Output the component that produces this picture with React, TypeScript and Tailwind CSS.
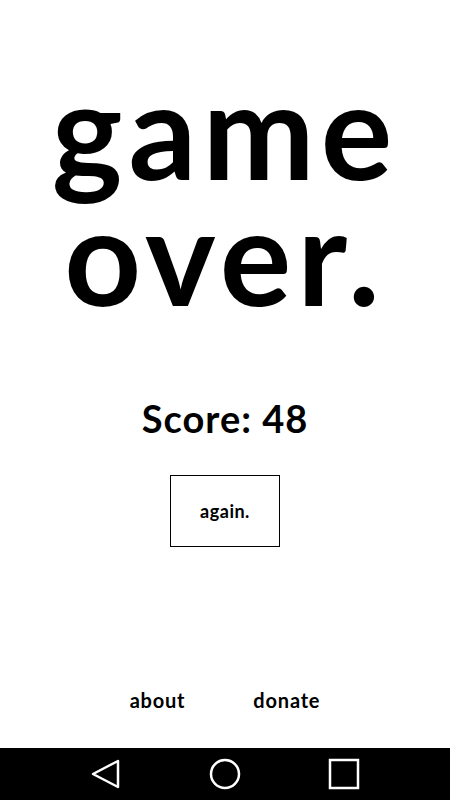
export default function App() {
  return (
    <div className="flex h-[800px] w-[450px] flex-col bg-white text-black" style={{ fontFamily: 'Lato, "Open Sans", sans-serif' }}>
      <div className="flex flex-1 flex-col items-center">
        <h1 className="mt-[66px] text-center text-[134px] font-bold leading-[126px] tracking-[6px]">
          game
          <br />
          over.
        </h1>
        <p className="mt-[81px] text-[38px] font-bold leading-none tracking-[1px]">Score: 48</p>
        <button className="mt-[38px] flex h-[72px] w-[110px] items-center justify-center border border-black text-[18px] font-bold tracking-[0.5px]">
          again.
        </button>
        <div className="mt-auto mb-[33px] flex gap-[68px] text-[20px] font-bold tracking-[0.8px]">
          <span>about</span>
          <span>donate</span>
        </div>
      </div>
      <nav className="flex h-[52px] items-center justify-center gap-[79px] bg-black">
        <svg width="40" height="32" viewBox="0 0 40 32" fill="none" stroke="white" strokeWidth="2.5">
          <path d="M32 3 L7 16 L32 29 Z" strokeLinejoin="round" />
        </svg>
        <svg width="40" height="32" viewBox="0 0 40 32" fill="none" stroke="white" strokeWidth="2.5">
          <circle cx="20" cy="16" r="14" />
        </svg>
        <svg width="40" height="32" viewBox="0 0 40 32" fill="none" stroke="white" strokeWidth="2.5">
          <rect x="6" y="2" width="28" height="28" />
        </svg>
      </nav>
    </div>
  )
}
